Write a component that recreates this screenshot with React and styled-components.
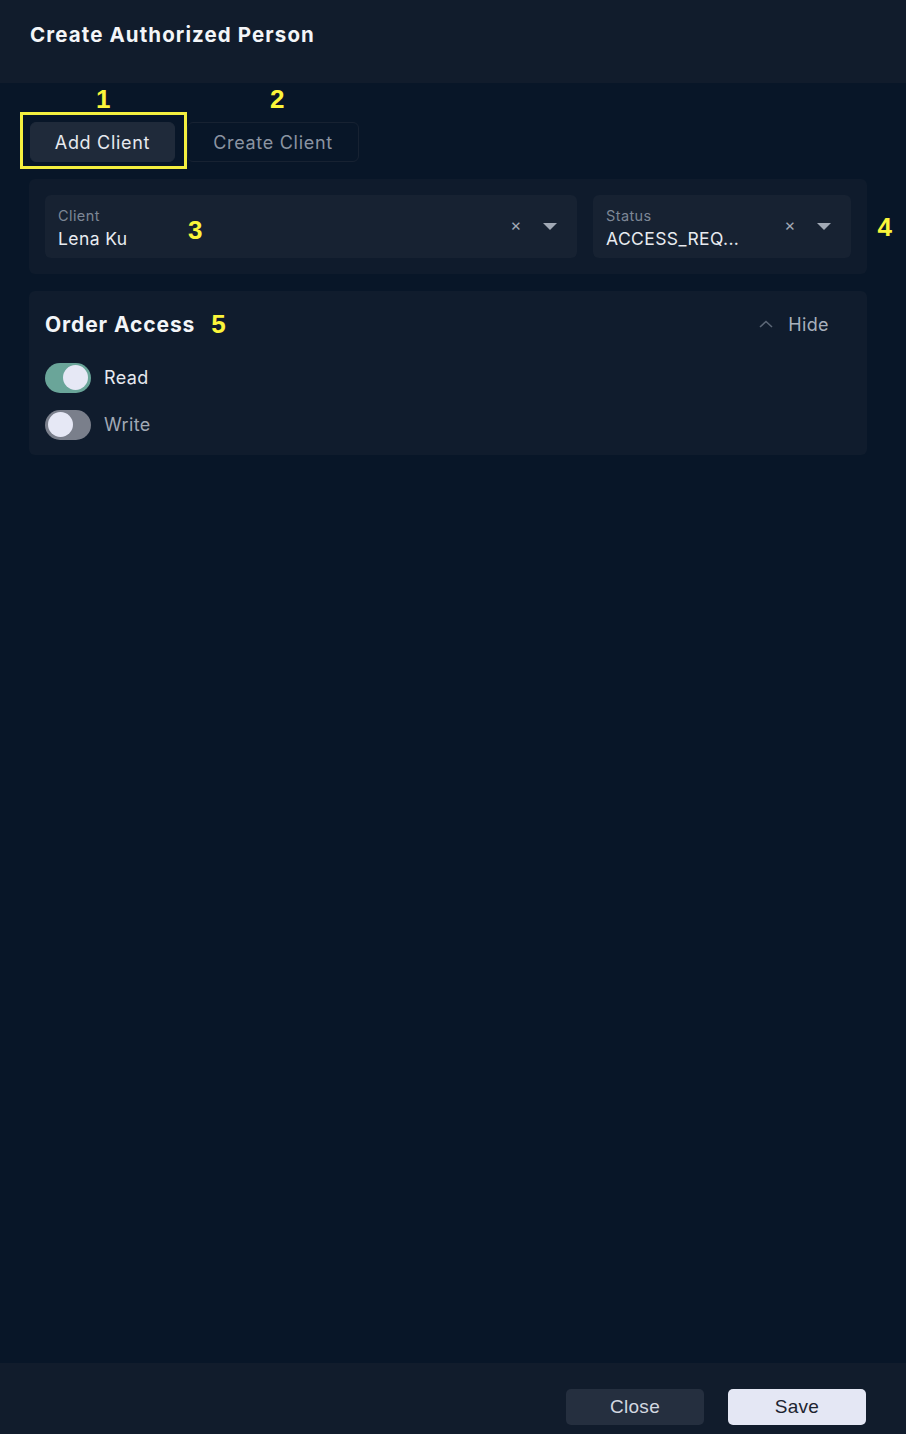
import styled, { createGlobalStyle } from 'styled-components';

const GlobalStyle = createGlobalStyle`
  html, body {
    margin: 0;
    padding: 0;
    background: #081628;
    font-family: Inter, "Noto Sans", sans-serif;
    letter-spacing: 0.4px;
  }
  * { box-sizing: border-box; }
`;

export default function App() {
  return (
    <>
      <GlobalStyle />
      <Page>
        <Header>
          <Title>Create Authorized Person</Title>
        </Header>
        <Main>
          <Tabs>
            <TabWrap>
              <Marker style={{ left: 66, top: -36 }}>1</Marker>
              <Highlight />
              <Tab active>Add Client</Tab>
            </TabWrap>
            <TabWrap>
              <Marker style={{ left: 83, top: -36 }}>2</Marker>
              <Tab>Create Client</Tab>
            </TabWrap>
          </Tabs>

          <FilterCard>
            <Field grow>
              <FieldText>
                <Label>Client</Label>
                <Value>Lena Ku</Value>
              </FieldText>
              <Marker style={{ left: 143, top: 22 }}>3</Marker>
              <Icons>
                <Clear>×</Clear>
                <Caret />
              </Icons>
            </Field>
            <Field width={258}>
              <FieldText>
                <Label>Status</Label>
                <Value>ACCESS_REQ...</Value>
              </FieldText>
              <Icons>
                <Clear>×</Clear>
                <Caret />
              </Icons>
            </Field>
            <Marker style={{ right: -25, top: 35 }}>4</Marker>
          </FilterCard>

          <AccessCard>
            <CardHead>
              <CardTitle>
                Order Access <Num>5</Num>
              </CardTitle>
              <HideBtn>
                <svg width="16" height="10" viewBox="0 0 16 10" fill="none">
                  <path d="M2 8 L8 2.5 L14 8" stroke="#5b6676" strokeWidth="1.6" />
                </svg>
                Hide
              </HideBtn>
            </CardHead>
            <Toggles>
              <ToggleRow>
                <Switch on><Knob on /></Switch>
                <ToggleLabel on>Read</ToggleLabel>
              </ToggleRow>
              <ToggleRow>
                <Switch><Knob /></Switch>
                <ToggleLabel>Write</ToggleLabel>
              </ToggleRow>
            </Toggles>
          </AccessCard>
        </Main>
        <Footer>
          <Button>Close</Button>
          <Button primary>Save</Button>
        </Footer>
      </Page>
    </>
  );
}

const Page = styled.div`
  display: flex;
  flex-direction: column;
  min-height: 1434px;
  background: #081628;
`;

const Header = styled.div`
  height: 83px;
  background: #111c2c;
  display: flex;
  align-items: center;
  padding: 0 30px 15px;
`;

const Title = styled.h1`
  margin: 0;
  color: #f3f5f8;
  font-size: 20.5px;
  font-weight: 700;
  letter-spacing: 1.1px;
`;

const Main = styled.div`
  flex: 1;
  padding: 39px 39px 0 29px;
  display: flex;
  flex-direction: column;
`;

const Tabs = styled.div`
  display: flex;
  gap: 12px;
  margin-left: 1px;
`;

const TabWrap = styled.div`
  position: relative;
`;

const Highlight = styled.div`
  position: absolute;
  left: -10px;
  top: -10px;
  width: 167px;
  height: 57px;
  border: 3px solid #f4ef3f;
  pointer-events: none;
`;

const Marker = styled.span`
  position: absolute;
  color: #fbf53a;
  font-family: "Liberation Sans", Arial, sans-serif;
  font-weight: 700;
  font-size: 26px;
  letter-spacing: 0;
  line-height: 1;
`;

const Num = styled.span`
  color: #fbf53a;
  font-family: "Liberation Sans", Arial, sans-serif;
  font-weight: 700;
  font-size: 26px;
  letter-spacing: 0;
  margin-left: 16px;
`;

const Tab = styled.button`
  height: 40px;
  padding: 0;
  width: ${p => (p.active ? '145px' : '172px')};
  border-radius: 6px;
  border: 1px solid ${p => (p.active ? '#1f2a3a' : '#172232')};
  background: ${p => (p.active ? '#1f2a3a' : 'transparent')};
  color: ${p => (p.active ? '#e6e9ef' : '#8b94a2')};
  font-family: inherit;
  font-size: 18px;
  letter-spacing: 0.7px;
  font-weight: 400;
`;

const FilterCard = styled.div`
  position: relative;
  margin-top: 17px;
  background: #0f1b2c;
  border-radius: 6px;
  padding: 16px;
  display: flex;
  gap: 16px;
  height: 95px;
`;

const Field = styled.div`
  position: relative;
  ${p => (p.grow ? 'flex: 1;' : `width: ${p.width}px;`)}
  height: 63px;
  background: #172232;
  border-radius: 6px;
  display: flex;
  align-items: center;
  padding: 0 20px 0 13px;
`;

const FieldText = styled.div`
  flex: 1;
  display: flex;
  flex-direction: column;
  gap: 4px;
  padding-top: 2px;
`;

const Label = styled.span`
  color: #7d8796;
  font-size: 14.5px;
`;

const Value = styled.span`
  color: #e8ebf0;
  font-size: 17.5px;
`;

const Icons = styled.div`
  display: flex;
  align-items: center;
  gap: 21px;
  margin-top: -2px;
`;

const Clear = styled.span`
  color: #a1a9b5;
  font-size: 17px;
  line-height: 1;
`;

const Caret = styled.span`
  width: 0;
  height: 0;
  border-left: 7px solid transparent;
  border-right: 7px solid transparent;
  border-top: 7px solid #a1a9b5;
  margin-top: 2px;
`;

const AccessCard = styled.div`
  margin-top: 17px;
  background: #101c2d;
  border-radius: 6px;
  padding: 19px 40px 14px 16px;
  display: flex;
  flex-direction: column;
  height: 164px;
`;

const CardHead = styled.div`
  display: flex;
  align-items: center;
  justify-content: space-between;
  height: 28px;
`;

const CardTitle = styled.h2`
  margin: 0;
  color: #f3f5f8;
  font-size: 21px;
  font-weight: 700;
  letter-spacing: 0.9px;
  display: flex;
  align-items: center;
`;

const HideBtn = styled.span`
  display: flex;
  align-items: center;
  gap: 14px;
  color: #a8b0bc;
  font-size: 18px;
  margin-right: -2px;
`;

const Toggles = styled.div`
  display: flex;
  flex-direction: column;
  gap: 18px;
  margin-top: 25px;
`;

const ToggleRow = styled.div`
  display: flex;
  align-items: center;
  gap: 13px;
  height: 29px;
`;

const Switch = styled.span`
  width: 46px;
  height: 30px;
  border-radius: 15px;
  background: ${p => (p.on ? '#6aa599' : '#7a7f8b')};
  display: flex;
  align-items: center;
  padding: 0 3px;
  justify-content: ${p => (p.on ? 'flex-end' : 'flex-start')};
`;

const Knob = styled.span`
  width: 25px;
  height: 25px;
  border-radius: 50%;
  background: #e6e8f5;
`;

const ToggleLabel = styled.span`
  color: ${p => (p.on ? '#e6e9ef' : '#a1a9b5')};
  font-size: 18px;
`;

const Footer = styled.div`
  height: 71px;
  background: #111c2c;
  display: flex;
  justify-content: flex-end;
  align-items: flex-start;
  gap: 24px;
  padding: 26px 40px 0 0;
`;

const Button = styled.button`
  width: 138px;
  height: 36px;
  border-radius: 5px;
  border: none;
  background: ${p => (p.primary ? '#e4e7f4' : '#252f3f')};
  color: ${p => (p.primary ? '#1c2430' : '#d3d8e0')};
  font-family: "Liberation Sans", Arial, sans-serif;
  font-size: 19px;
  letter-spacing: 0.3px;
`;
